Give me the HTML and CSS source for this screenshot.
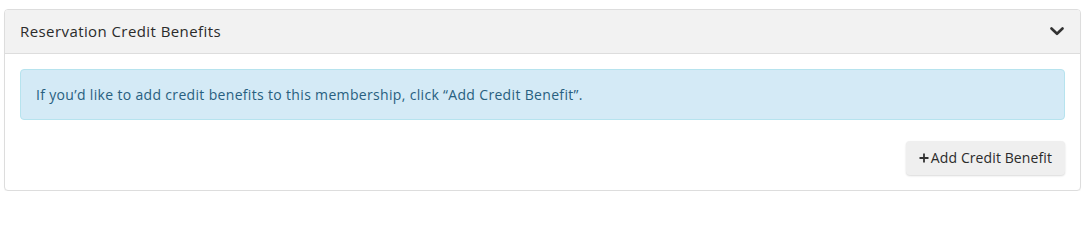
FILE: index.html
```html
<!DOCTYPE html>
<html>
<head>
<meta charset="utf-8">
<link rel="stylesheet" href="styles.css">
</head>
<body>
<div class="panel">
  <div class="panel-heading">
    <span class="panel-title">Reservation Credit Benefits</span>
    <svg class="chevron" width="14" height="9" viewBox="0 0 14 9"><path d="M1.5 1.5 L7 6.8 L12.5 1.5" fill="none" stroke="#333" stroke-width="2.6" stroke-linecap="round" stroke-linejoin="round"/></svg>
  </div>
  <div class="panel-body">
    <div class="alert">If you’d like to add credit benefits to this membership, click “Add Credit Benefit”.</div>
    <div class="actions">
      <button class="btn"><svg class="plus" width="10" height="10" viewBox="0 0 10 10"><path d="M5 0.5 V9.5 M0.5 5 H9.5" stroke="#333" stroke-width="1.8" fill="none"/></svg><span>Add Credit Benefit</span></button>
    </div>
  </div>
</div>
</body>
</html>
```
FILE: styles.css
```css
html, body {
  margin: 0;
  padding: 0;
  background: #fff;
}
body {
  font-family: "Open Sans", "Noto Sans", sans-serif;
  padding: 9px 6px 0 4px;
  color: #333;
}
.panel {
  border: 1px solid #dddddd;
  border-radius: 4px;
  background: #fff;
  box-shadow: 0 1px 1px rgba(0,0,0,0.04);
}
.panel-heading {
  display: flex;
  align-items: center;
  justify-content: space-between;
  background: #f2f2f2;
  border-bottom: 1px solid #dddddd;
  border-radius: 3px 3px 0 0;
  padding: 11px 16px 11px 15px;
  height: 21px;
}
.panel-title {
  font-size: 15px;
  letter-spacing: 0.42px;
  line-height: 21px;
  color: #2b2b2b;
}
.chevron {
  display: block;
}
.panel-body {
  padding: 15px;
}
.alert {
  background: #d4eaf6;
  border: 1px solid #b6e3ee;
  border-radius: 4px;
  color: #285f80;
  font-size: 14px;
  letter-spacing: 0.33px;
  line-height: 19px;
  padding: 15px;
}
.actions {
  display: flex;
  justify-content: flex-end;
  margin-top: 21px;
}
.btn {
  display: flex;
  align-items: center;
  font-family: "Open Sans", "Noto Sans", sans-serif;
  font-size: 14px;
  letter-spacing: 0.1px;
  line-height: 20px;
  color: #2b2b2b;
  background: #efefef;
  border: none;
  border-radius: 4px;
  box-shadow: 0 1px 2px rgba(0,0,0,0.15);
  padding: 7px 13px;
  height: 34px;
  cursor: pointer;
}
.plus {
  display: block;
  margin-right: 2px;
}
```
